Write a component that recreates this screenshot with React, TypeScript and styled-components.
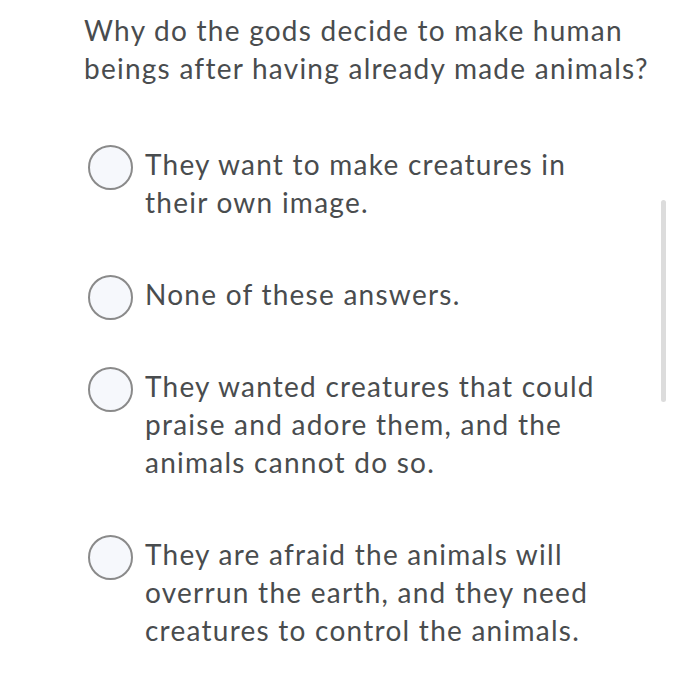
import React from "react";
import styled, { createGlobalStyle } from "styled-components";

const Global = createGlobalStyle`
  html, body { margin: 0; padding: 0; background: #ffffff; }
  body { font-family: Lato, "Open Sans", sans-serif; color: #494c4e; }
`;

const Page = styled.div`
  position: relative;
  width: 700px;
  height: 691px;
  box-sizing: border-box;
  padding: 11px 0 0 84px;
  overflow: hidden;
`;

const Question = styled.div`
  font-size: 28px;
  line-height: 38px;
  letter-spacing: 1.25px;
  white-space: nowrap;
  margin-bottom: 58px;
`;

const Options = styled.div`
  display: flex;
  flex-direction: column;
  gap: 54px;
`;

const Option = styled.label`
  display: flex;
  align-items: flex-start;
  gap: 12px;
`;

const Radio = styled.span`
  flex: none;
  box-sizing: border-box;
  width: 45px;
  height: 45px;
  margin: 0 0 -7px 4px;
  border-radius: 50%;
  border: 2px solid #8a8a8a;
  background: #f6f8fc;
`;

const OptionText = styled.span`
  font-size: 28px;
  line-height: 38px;
  letter-spacing: 1.25px;
  white-space: nowrap;
`;

const Scrollbar = styled.div`
  position: absolute;
  left: 661px;
  top: 200px;
  width: 5px;
  height: 202px;
  border-radius: 3px;
  background: #dcdcdc;
`;

const options = [
  ["They want to make creatures in", "their own image."],
  ["None of these answers."],
  ["They wanted creatures that could", "praise and adore them, and the", "animals cannot do so."],
  ["They are afraid the animals will", "overrun the earth, and they need", "creatures to control the animals."],
];

export default function App() {
  return (
    <>
      <Global />
      <Page>
        <Question>
          Why do the gods decide to make human
          <br />
          beings after having already made animals?
        </Question>
        <Options>
          {options.map((lines, i) => (
            <Option key={i}>
              <Radio />
              <OptionText>
                {lines.map((l, j) => (
                  <React.Fragment key={j}>
                    {j > 0 && <br />}
                    {l}
                  </React.Fragment>
                ))}
              </OptionText>
            </Option>
          ))}
        </Options>
        <Scrollbar />
      </Page>
    </>
  );
}
